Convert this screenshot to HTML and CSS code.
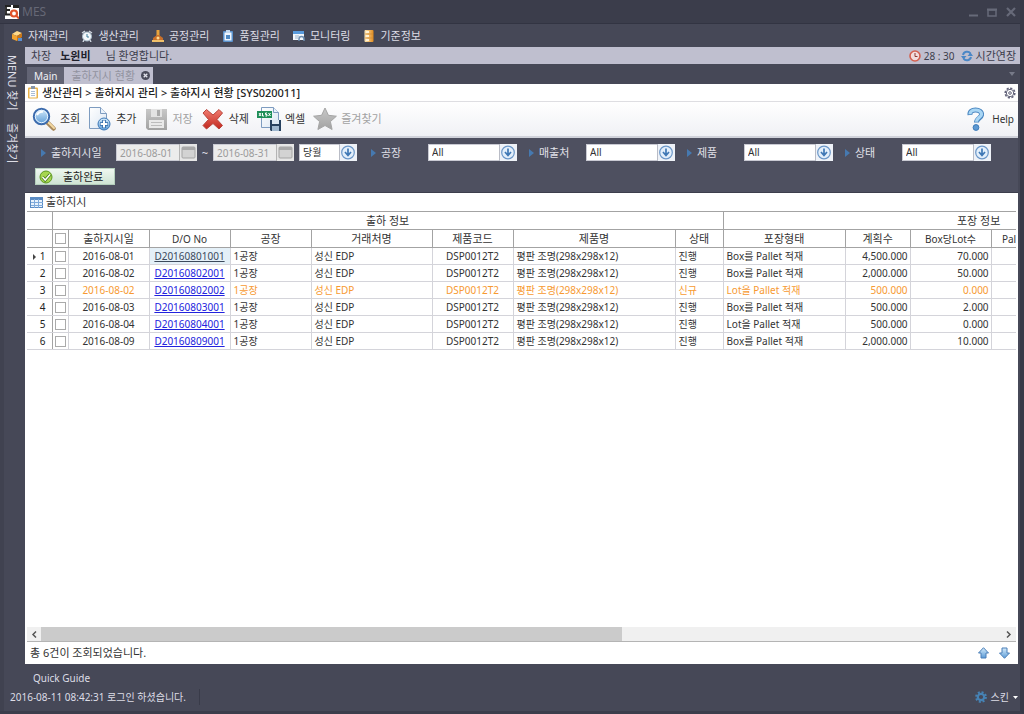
FILE: index.html
```html
<!DOCTYPE html>
<html lang="ko">
<head>
<meta charset="utf-8">
<title>MES</title>
<link rel="stylesheet" href="styles.css">
</head>
<body>
<svg class="defs" width="0" height="0" aria-hidden="true">
  <defs>
    <linearGradient id="blue" x1="0" y1="0" x2="0" y2="1"><stop offset="0" stop-color="#d6ecfb"/><stop offset="1" stop-color="#5a9ad6"/></linearGradient>
    <linearGradient id="red" x1="0" y1="0" x2="0" y2="1"><stop offset="0" stop-color="#f07c70"/><stop offset="1" stop-color="#c2281f"/></linearGradient>
    <linearGradient id="gold" x1="0" y1="0" x2="1" y2="0"><stop offset="0" stop-color="#ffe9b8"/><stop offset="1" stop-color="#e08a1c"/></linearGradient>
    <linearGradient id="paper" x1="0" y1="0" x2="1" y2="1"><stop offset="0" stop-color="#ffffff"/><stop offset="1" stop-color="#dbe6f2"/></linearGradient>
    <linearGradient id="grey" x1="0" y1="0" x2="0" y2="1"><stop offset="0" stop-color="#c8c8c8"/><stop offset="1" stop-color="#a2a2a2"/></linearGradient>
    <symbol id="drop" viewBox="0 0 18 17">
      <rect width="18" height="17" fill="#eef2f8"/><path d="M.5 0v17" stroke="#b9bcc6"/>
      <circle cx="9" cy="8.500" r="6.300" fill="#e3effb" stroke="#6b97c8" stroke-width="1.200"/>
      <path d="M9 4.500v7M6 8l3 3.500L12 8" fill="none" stroke="#3f78b5" stroke-width="1.700"/>
    </symbol>
    <symbol id="cal" viewBox="0 0 18 17">
      <rect width="18" height="17" fill="#e6e6e6"/><path d="M.5 0v17" stroke="#b4b4b4"/>
      <rect x="3" y="3" width="13" height="11" rx="1" fill="#d3d3d3" stroke="#a5a5a5"/><rect x="3" y="3" width="13" height="3" fill="#a9a9a9"/>
    </symbol>
  </defs>
</svg>

<div class="window">
  <header class="titlebar">
    <svg width="14" height="14" viewBox="0 0 14 14"><rect width="14" height="14" fill="#fff"/><path d="M0 1h6M1 5h4M0 9.500h6M1 0v10" fill="none" stroke="#222" stroke-width="1.800"/><path d="M8 0h6v3H8z" fill="#222"/><circle cx="9" cy="8.500" r="3" fill="none" stroke="#e0532b" stroke-width="2.200"/><path d="M11 10.500l3 3" stroke="#e0532b" stroke-width="2"/></svg>
    <h1>MES</h1>
    <div class="window-buttons">
      <button aria-label="최소화"><svg width="10" height="10" viewBox="0 0 10 10"><path d="M1 8.500h9" stroke="#676a79" stroke-width="2"/></svg></button>
      <button aria-label="최대화"><svg width="10" height="10" viewBox="0 0 10 10"><path d="M1 3h8v6H1z" fill="none" stroke="#676a79" stroke-width="1.500"/><path d="M0 2.500h10" stroke="#676a79" stroke-width="2"/></svg></button>
      <button aria-label="닫기"><svg width="10" height="10" viewBox="0 0 10 10"><path d="M1 1l8 8M9 1L1 9" stroke="#676a79" stroke-width="2.200"/></svg></button>
    </div>
  </header>

  <nav class="menu">
    <a href="#"><svg width="12" height="12" viewBox="0 0 12 12"><path d="M1 4l5-3 5 2-5 3z" fill="#ffd98a"/><path d="M1 4l5 2v5L1 9z" fill="#f3a431"/><path d="M6 6l5-3v4L6 11z" fill="#c9781a"/><path d="M7 8h4v3H7z" fill="#5b8fd0"/></svg>자재관리</a>
    <a href="#"><svg width="12" height="12" viewBox="0 0 12 12"><path d="M1 3l3-2M11 3L8 1M3 10l-1 2M9 10l1 2" stroke="#cfd6df" stroke-width="1.500"/><circle cx="6" cy="6.500" r="4.500" fill="#f4f8fb" stroke="#a9bccb"/><path d="M6 4v3h2" fill="none" stroke="#3c7d9b"/></svg>생산관리</a>
    <a href="#"><svg width="12" height="12" viewBox="0 0 12 12"><rect x="4.500" y="0" width="3" height="6" fill="#e8a33c"/><path d="M1 8l4-3h2l4 3v3H1z" fill="#c9702a"/><path d="M0 11h12" stroke="#f0c06a" stroke-width="2"/><circle cx="6" cy="8" r="1.500" fill="#ffdc90"/></svg>공정관리</a>
    <a href="#"><svg width="12" height="12" viewBox="0 0 12 12"><rect x="1" y="1" width="10" height="11" rx="1" fill="#5b92cc"/><rect x="2.500" y="2.500" width="7" height="8" fill="#eef6ff"/><rect x="4" y="0" width="4" height="3" fill="#c3d9ef"/><path d="M4 5h4v4H4z" fill="#4f8ac4"/></svg>품질관리</a>
    <a href="#"><svg width="12" height="12" viewBox="0 0 12 12"><rect x="0" y="1" width="11" height="9" fill="#f3f7fb"/><rect x="0" y="1" width="11" height="3" fill="#5a9bdc"/><path d="M2 6h4M2 8h3" stroke="#9fb6cc"/><path d="M6 11V9a2.500 2.500 0 0 1 5 0v2" fill="none" stroke="#6f8fb0" stroke-width="1.500"/></svg>모니터링</a>
    <a href="#"><svg width="12" height="12" viewBox="0 0 12 12"><rect x="1.500" y="0" width="9" height="12" rx="1" fill="url(#gold)"/><path d="M2 4h8M2 8h8" stroke="#d08a32" stroke-width=".7"/><path d="M3 2h3M3 6h3M3 10h3" stroke="#fff3d6" stroke-width="2"/></svg>기준정보</a>
  </nav>

  <div class="workspace">
    <aside class="side">
      <a href="#">MENU 찾기</a>
      <a href="#">즐겨찾기</a>
    </aside>

    <main class="main">
      <div class="welcome">
        <span>차장</span><strong>노윈비</strong><span class="greeting">님 환영합니다.</span>
        <span class="timer"><svg width="12" height="12" viewBox="0 0 12 12"><circle cx="6" cy="6" r="5" fill="#f2dcdc" stroke="#d4604f" stroke-width="1.600"/><path d="M6 3v3.500h2.500" fill="none" stroke="#8d3a32"/></svg>28 : 30</span>
        <button class="extend"><svg width="12" height="12" viewBox="0 0 12 12"><path d="M2 5a4.200 4.200 0 0 1 7.500-1.500M10 7a4.200 4.200 0 0 1-7.500 1.500" fill="none" stroke="#4a87c6" stroke-width="2"/><path d="M6.500 6H12L9.500 2.500zM5.500 6H0l2.500 3.500z" fill="#4a87c6"/></svg>시간연장</button>
      </div>

      <div class="tabs">
        <button class="tab">Main</button>
        <button class="tab active">출하지시 현황<svg width="9" height="9" viewBox="0 0 9 9"><circle cx="4.500" cy="4.500" r="4.500" fill="#4a4b5a"/><path d="M2.700 2.700l3.600 3.600M6.300 2.700L2.700 6.300" stroke="#e3e3ec" stroke-width="1.300"/></svg></button>
        <svg class="tab-more" width="6" height="4" viewBox="0 0 6 4"><path d="M0 0h6L3 4z" fill="#777a89"/></svg>
      </div>

      <div class="crumb">
        <svg width="12" height="13" viewBox="0 0 12 13"><rect x="1" y="1.500" width="10" height="11" rx="1" fill="#e9b24a"/><rect x="2.500" y="3" width="7" height="8.500" fill="#fff"/><rect x="4" y="0" width="4" height="3" fill="#8795a8"/><path d="M4 5.500h4M4 7.500h4M4 9.500h4" stroke="#a9bdd6"/></svg>
        <h2>생산관리 &gt; 출하지시 관리 &gt; 출하지시 현황 [SYS020011]</h2>
        <svg class="right" width="12" height="12" viewBox="0 0 12 12"><circle cx="6" cy="6" r="4.800" fill="none" stroke="#62637a" stroke-width="1.600" stroke-dasharray="2.200 1.500"/><circle cx="6" cy="6" r="3.700" fill="#fff" stroke="#62637a"/><circle cx="6" cy="6" r="1.300" fill="none" stroke="#62637a"/></svg>
      </div>

      <div class="toolbar">
        <button><svg width="24" height="24" viewBox="0 0 24 24"><path d="M15 15l6.500 6.500" stroke="#a8885c" stroke-width="4.500" stroke-linecap="round"/><path d="M16.500 15.500l5.500 5.500" stroke="#f3d8a2" stroke-width="2" stroke-linecap="round"/><circle cx="9.500" cy="9.500" r="7.700" fill="url(#blue)" stroke="#3d6cae" stroke-width="2"/><circle cx="9.500" cy="9.500" r="6.200" fill="none" stroke="#e8f4ff"/><path d="M5 8q2-4 6-3" stroke="#fff" stroke-width="1.800" fill="none"/></svg>조회</button>
        <button><svg width="24" height="24" viewBox="0 0 24 24"><path d="M1.500.500h11l6 6v15h-17z" fill="url(#paper)" stroke="#7e9cc0"/><path d="M12.500.500v6h6" fill="#eaf2fb" stroke="#7e9cc0"/><circle cx="16" cy="17" r="6" fill="url(#blue)" stroke="#3e79b8"/><path d="M16 13v8M12 17h8" stroke="#2f69a8" stroke-width="3.600"/><path d="M16 13.600v6.800M12.600 17h6.800" stroke="#fff" stroke-width="2"/></svg>추가</button>
        <button disabled><svg width="24" height="24" viewBox="0 0 24 24"><path d="M1 2h21v21H3l-2-2z" fill="url(#grey)"/><rect x="6" y="2" width="11" height="8" fill="#e3e3e3"/><rect x="12" y="3" width="3" height="6" fill="#aaa"/><rect x="4" y="13" width="15" height="8" fill="#e9e9e9"/><path d="M6 15.500h11M6 18.500h11" stroke="#bcbcbc"/></svg>저장</button>
        <button><svg width="24" height="24" viewBox="0 0 24 24"><path d="M2 6l3.500-3.500L12 8l6-5.500L21.500 6 16 12.500l5.500 6L18 22l-6-5.500L5.500 22 2 18.500l5.500-6z" fill="url(#red)" stroke="#b9443b" stroke-linejoin="round"/></svg>삭제</button>
        <button><svg width="24" height="24" viewBox="0 0 24 24"><path d="M4.500.500h12l5 5v15h-17z" fill="url(#paper)" stroke="#7e9cc0"/><path d="M16.500.500v5h5" fill="#eaf2fb" stroke="#7e9cc0"/><rect x="0" y="4" width="15" height="7" fill="#1f8f59"/><path d="M2 6l2 3M4 6L2 9M5.500 6v3h1.500M10 6H8.500v1.500H10V9H8.500M11.500 6l2 3M13.500 6l-2 3" fill="none" stroke="#fff"/><path d="M13 13h11v11H14l-1-1z" fill="#27415f"/><rect x="15" y="13" width="7" height="4" fill="#dce8f3"/><rect x="15" y="19" width="7" height="5" fill="#9fb8d0"/></svg>엑셀</button>
        <button disabled><svg width="24" height="24" viewBox="0 0 24 24"><path d="M12 1l3.400 7.300 8 .9-6 5.400 1.700 7.900-7.100-4-7.100 4 1.700-7.900-6-5.400 8-.9z" fill="url(#grey)" stroke="#a5a5a5"/></svg>즐겨찾기</button>
        <button class="right"><svg width="24" height="24" viewBox="0 0 24 24"><path d="M7 8C6.500 4.500 9 3 12.500 3S19 4.500 18.500 8c-.5 3-5 3.500-5 7.500" fill="none" stroke="#4a86c0" stroke-width="5"/><path d="M7 7.300C7 4.500 9.500 3 12.500 3s6 1.500 6 4.500c-.5 3-5 3.500-5 7.300" fill="none" stroke="#a9d6f4" stroke-width="3.200"/><circle cx="13" cy="20.500" r="2.900" fill="#5c98d2" stroke="#3c7ab8"/></svg>Help</button>
      </div>

      <form class="filters">
        <div class="filter-row">
          <label class="caption wide" for="from">출하지시일</label>
          <div class="field date"><input id="from" value="2016-08-01" disabled><svg><use href="#cal"/></svg></div>
          <span class="tilde">~</span>
          <div class="field date"><input aria-label="종료일" value="2016-08-31" disabled><svg><use href="#cal"/></svg></div>
          <div class="field period"><select aria-label="기간"><option>당월</option></select><svg><use href="#drop"/></svg></div>
          <div class="pair"><label class="caption" for="plant">공장</label><div class="field"><select id="plant"><option>All</option></select><svg><use href="#drop"/></svg></div></div>
          <div class="pair"><label class="caption" for="customer">매출처</label><div class="field"><select id="customer"><option>All</option></select><svg><use href="#drop"/></svg></div></div>
          <div class="pair"><label class="caption" for="product">제품</label><div class="field"><select id="product"><option>All</option></select><svg><use href="#drop"/></svg></div></div>
          <div class="pair"><label class="caption" for="state">상태</label><div class="field"><select id="state"><option>All</option></select><svg><use href="#drop"/></svg></div></div>
        </div>
        <button type="button" class="done"><svg width="14" height="14" viewBox="0 0 14 14"><circle cx="7" cy="7" r="6" fill="#a6d650" stroke="#5d9a22"/><path d="M3.500 7l2.700 3L11 4.500" fill="none" stroke="#3f7514" stroke-width="3"/><path d="M3.500 7l2.700 3L11 4.500" fill="none" stroke="#fff" stroke-width="1.500"/></svg><span>출하완료</span></button>
      </form>

      <section class="panel">
        <h3><svg width="13" height="11" viewBox="0 0 13 11"><rect x=".5" y=".5" width="12" height="10" fill="#e8f2fc" stroke="#5b8cc4"/><rect x="0" y="0" width="13" height="3" fill="#5b8cc4"/><path d="M1 5.500h12M1 8.500h12M4.500 2v9M8.500 2v9" stroke="#7faadb"/></svg>출하지시</h3>
        <div class="grid">
          <table>
            <colgroup><col class="w25"><col class="w16"><col class="w81"><col class="w81"><col class="w81"><col class="w121"><col class="w81"><col class="w162"><col class="w48"><col class="w122"><col class="w65"><col class="w81"><col class="w81"><col class="w162"></colgroup>
            <thead>
              <tr><th></th><th colspan="8">출하 정보</th><th colspan="5">포장 정보</th></tr>
              <tr><th></th><th><input type="checkbox" aria-label="전체 선택"></th><th>출하지시일</th><th class="latin">D/O No</th><th>공장</th><th>거래처명</th><th>제품코드</th><th>제품명</th><th>상태</th><th>포장형태</th><th>계획수</th><th class="latin">Box당Lot수</th><th class="latin">Pallet당Lot수</th><th></th></tr>
            </thead>
            <tbody>
              <tr><td class="no current">1</td><td><input type="checkbox" aria-label="1행"></td><td class="mid">2016-08-01</td><td class="mid picked"><a href="#">D20160801001</a></td><td>1공장</td><td>성신 EDP</td><td class="mid">DSP0012T2</td><td>평판 조명(298x298x12)</td><td>진행</td><td>Box를 Pallet 적재</td><td class="num">4,500.000</td><td class="num">70.000</td><td></td><td></td></tr>
              <tr><td class="no">2</td><td><input type="checkbox" aria-label="2행"></td><td class="mid">2016-08-02</td><td class="mid"><a href="#">D20160802001</a></td><td>1공장</td><td>성신 EDP</td><td class="mid">DSP0012T2</td><td>평판 조명(298x298x12)</td><td>진행</td><td>Box를 Pallet 적재</td><td class="num">2,000.000</td><td class="num">50.000</td><td></td><td></td></tr>
              <tr class="new"><td class="no">3</td><td><input type="checkbox" aria-label="3행"></td><td class="mid">2016-08-02</td><td class="mid"><a href="#">D20160802002</a></td><td>1공장</td><td>성신 EDP</td><td class="mid">DSP0012T2</td><td>평판 조명(298x298x12)</td><td>신규</td><td>Lot을 Pallet 적재</td><td class="num">500.000</td><td class="num">0.000</td><td></td><td></td></tr>
              <tr><td class="no">4</td><td><input type="checkbox" aria-label="4행"></td><td class="mid">2016-08-03</td><td class="mid"><a href="#">D20160803001</a></td><td>1공장</td><td>성신 EDP</td><td class="mid">DSP0012T2</td><td>평판 조명(298x298x12)</td><td>진행</td><td>Box를 Pallet 적재</td><td class="num">500.000</td><td class="num">2.000</td><td></td><td></td></tr>
              <tr><td class="no">5</td><td><input type="checkbox" aria-label="5행"></td><td class="mid">2016-08-04</td><td class="mid"><a href="#">D20160804001</a></td><td>1공장</td><td>성신 EDP</td><td class="mid">DSP0012T2</td><td>평판 조명(298x298x12)</td><td>진행</td><td>Lot을 Pallet 적재</td><td class="num">500.000</td><td class="num">0.000</td><td></td><td></td></tr>
              <tr><td class="no">6</td><td><input type="checkbox" aria-label="6행"></td><td class="mid">2016-08-09</td><td class="mid"><a href="#">D20160809001</a></td><td>1공장</td><td>성신 EDP</td><td class="mid">DSP0012T2</td><td>평판 조명(298x298x12)</td><td>진행</td><td>Box를 Pallet 적재</td><td class="num">2,000.000</td><td class="num">10.000</td><td></td><td></td></tr>
            </tbody>
          </table>
        </div>
        <div class="scroll">
          <button aria-label="왼쪽"><svg width="6" height="7" viewBox="0 0 6 7"><path d="M5 .5l-3 3 3 3" fill="none" stroke="#555" stroke-width="1.500"/></svg></button>
          <div class="track"><div class="thumb"></div></div>
          <button aria-label="오른쪽"><svg width="6" height="7" viewBox="0 0 6 7"><path d="M1 .5l3 3-3 3" fill="none" stroke="#555" stroke-width="1.500"/></svg></button>
        </div>
        <div class="status">
          <span>총 6건이 조회되었습니다.</span>
          <button class="right" aria-label="위로"><svg width="11" height="12" viewBox="0 0 11 12"><path d="M5.500.700l5 5.300H8v5H3V6H.5z" fill="url(#blue)" stroke="#4b7fb8"/></svg></button>
          <button aria-label="아래로"><svg width="11" height="12" viewBox="0 0 11 12"><path d="M5.500 11.300l5-5.300H8V1H3v5H.5z" fill="url(#blue)" stroke="#4b7fb8"/></svg></button>
        </div>
      </section>
    </main>
  </div>

  <footer class="footer">
    <a class="guide" href="#">Quick Guide</a>
    <div class="login">
      <span>2016-08-11 08:42:31 로그인 하셨습니다.</span>
      <button class="right"><svg width="12" height="12" viewBox="0 0 12 12"><circle cx="6" cy="6" r="4.800" fill="none" stroke="#4682b4" stroke-width="2.200" stroke-dasharray="2 1.770"/><circle cx="6" cy="6" r="3.200" fill="none" stroke="#4682b4" stroke-width="2.200"/></svg>스킨<svg width="5" height="3" viewBox="0 0 5 3"><path d="M0 0h5L2.500 3z" fill="#fff"/></svg></button>
    </div>
  </footer>
</div>
</body>
</html>
```
FILE: styles.css
```css
* { box-sizing: border-box; }
body {
  margin: 0;
  background: #464857;
  color: #333;
  font: 11px/16px "Noto Sans", "Noto Sans CJK KR", sans-serif;
}
h1, h2, h3 { margin: 0; font-weight: 400; }
svg { display: block; flex: none; }
.defs { position: absolute; }
button {
  display: flex;
  align-items: center;
  margin: 0;
  padding: 0;
  border: 0;
  background: none;
  color: inherit;
  font: inherit;
  white-space: nowrap;
}
a { color: inherit; text-decoration: none; white-space: nowrap; }
.right { margin-left: auto; }

.window {
  display: flex;
  flex-direction: column;
  min-height: 100vh;
  border-right: 4px solid #373a48;
  border-bottom: 3px solid #3b3d4b;
}
.titlebar {
  display: flex;
  align-items: center;
  gap: 3px;
  height: 24px;
  padding: 0 4px 0 5px;
  background: #3b3d4b;
  border-bottom: 1px solid #323442;
}
.titlebar h1 { color: #666876; font-size: 12px; }
.window-buttons { display: flex; gap: 9px; margin-left: auto; }

.menu {
  display: flex;
  gap: 13px;
  height: 23px;
  border-left: 4px solid #404250;
  padding-left: 7px;
  color: #dddde6;
}
.menu a { display: flex; align-items: center; gap: 5px; }

.workspace { display: flex; flex: 1; min-height: 0; }
.side {
  display: flex;
  flex-direction: column;
  align-items: flex-start;
  gap: 12px;
  width: 25px;
  flex: none;
  padding: 8px 0 0 1px;
  border-left: 4px solid #404250;
  color: #dddde6;
  line-height: 14px;
}
.side a { writing-mode: vertical-rl; text-orientation: sideways; }

.main { display: flex; flex-direction: column; flex: 1; min-width: 0; }
.welcome {
  display: flex;
  align-items: center;
  height: 17px;
  padding: 0 4px 0 6px;
  background: #bfbfcf;
  color: #3c3d4c;
}
.welcome strong { margin: 0 15px 0 9px; color: #20212c; }
.welcome strong, .welcome span { white-space: nowrap; }
.timer { display: flex; align-items: center; gap: 3px; margin-left: auto; font-size: 10px; }
.extend { gap: 3px; margin-left: 6px; }

.tabs { display: flex; align-items: flex-end; height: 20px; padding-left: 2px; }
.tab {
  height: 17px;
  padding: 0 7px;
  background: #626474;
  color: #f0f0f5;
  font-size: 10px;
}
.tab.active { gap: 6px; padding: 0 3px 0 7px; background: #bfbfcf; color: #92939f; font-size: 11px; }
.tab-more { align-self: center; margin: 0 5px 0 auto; }

.crumb {
  display: flex;
  align-items: center;
  gap: 3px;
  height: 18px;
  margin-right: 2px;
  padding: 0 2px;
  background: #fff;
  border-bottom: 1px solid #dedee2;
}
.crumb h2 { font-size: 11px; font-weight: 500; color: #222; }

.toolbar {
  display: flex;
  align-items: center;
  gap: 8px;
  height: 36px;
  margin-right: 2px;
  padding: 0 4px 0 7px;
  background: linear-gradient(#fff, #f0f1f5);
  border-bottom: 2px solid #d0d2da;
}
.toolbar button { gap: 4px; }
.toolbar button:disabled { color: #a2a2a2; }
.toolbar .right { gap: 5px; font-size: 10px; }

.filters {
  height: 55px;
  margin-right: 2px;
  padding: 6px 0 0 10px;
  background: #4e5060;
  border-bottom: 1px solid #3c3e4c;
}
.filter-row { display: flex; align-items: center; height: 17px; color: #e0e0e8; }
.caption { display: flex; align-items: center; gap: 5px; width: 58px; white-space: nowrap; }
.caption::before {
  content: "";
  margin-left: 1px;
  border: 4px solid transparent;
  border-left: 5px solid #4679b0;
  border-right: 0;
}
.caption.wide { width: 81px; padding-left: 5px; }
.pair { display: flex; align-items: center; margin-left: 11px; }
.field { display: grid; width: 89px; height: 17px; }
.field.date { width: 81px; }
.field.period { width: 58px; margin: 0 2px 0 5px; }
.tilde { width: 16px; text-align: center; }
.field > * { grid-area: 1 / 1; }
.field svg { width: 18px; height: 17px; justify-self: end; pointer-events: none; }
.field input, .field select {
  width: 100%;
  height: 17px;
  margin: 0;
  padding: 0 18px 0 3px;
  border: 1px solid #c9cad3;
  border-radius: 0;
  appearance: none;
  background: #fff;
  color: #333;
  font: 10px/15px "Noto Sans", "Noto Sans CJK KR", sans-serif;
}
.field input:disabled { background: #ececec; color: #9b9b9b; }
.done {
  gap: 10px;
  width: 80px;
  height: 17px;
  margin-top: 7px;
  padding: 0 3px;
  border: 1px solid #b4cfbc;
  background: linear-gradient(#eff7f0, #cfe4d4);
  color: #222;
}

.panel {
  display: flex;
  flex-direction: column;
  flex: 1;
  margin-right: 2px;
  padding: 0 2px;
  background: #fff;
}
.panel h3 { display: flex; align-items: center; gap: 3px; height: 18px; padding-left: 3px; font-size: 11px; }
.grid { flex: 1; overflow: hidden; }
table {
  width: 1207px;
  table-layout: fixed;
  border-collapse: collapse;
  font-size: 10px;
  line-height: 14px;
}
.w16 { width: 16px; } .w25 { width: 25px; } .w48 { width: 48px; } .w65 { width: 65px; }
.w81 { width: 81px; } .w121 { width: 121px; } .w122 { width: 122px; } .w162 { width: 162px; }
th, td { height: 17px; padding: 0 3px; border: 1px solid #d4d4da; white-space: nowrap; text-align: left; }
th { height: 18px; padding: 0; border-color: #a3a3a3; font-size: 11px; font-weight: 400; text-align: center; }
th.latin { font-size: 10px; }
th:first-child, td:first-child { border-left: 0; }
td.no { padding-right: 6px; border-right-color: #a3a3a3; text-align: right; color: #222; }
.current::before {
  content: "";
  display: inline-block;
  margin-right: 4px;
  border: 3px solid transparent;
  border-left: 3px solid #444;
  border-right: 0;
}
td.mid { text-align: center; }
td.num { padding-right: 2px; text-align: right; }
td a { color: #2222dd; text-decoration: underline; }
td.picked { background: #e4f0f8; }
td.picked a { color: #3c4a5c; }
.new td { color: #f79a32; }
.new td.no { color: #222; }
table input {
  display: block;
  width: 11px;
  height: 11px;
  margin: 0 auto;
  appearance: none;
  border: 1px solid #aaa;
  background: #fff;
}
td:nth-child(2) { padding: 0; }

.scroll { display: flex; height: 15px; background: #f0f0f0; border-bottom: 1px solid #b4b4b4; }
.scroll button { width: 14px; justify-content: center; }
.track { flex: 1; }
.thumb { width: 60.5%; height: 14px; background: #cbcbcb; }
.status { display: flex; align-items: center; gap: 10px; height: 22px; padding: 0 6px 0 3px; }

.footer { height: 47px; padding: 6px 0 0 4px; border-left: 4px solid #404250; color: #dddde6; font-size: 10px; }
.guide { display: block; padding-left: 25px; }
.login { display: flex; align-items: center; height: 22px; padding-left: 2px; }
.login span { padding-right: 13px; border-right: 1px solid #393b49; }
.login .right { gap: 4px; padding-right: 2px; }
```
